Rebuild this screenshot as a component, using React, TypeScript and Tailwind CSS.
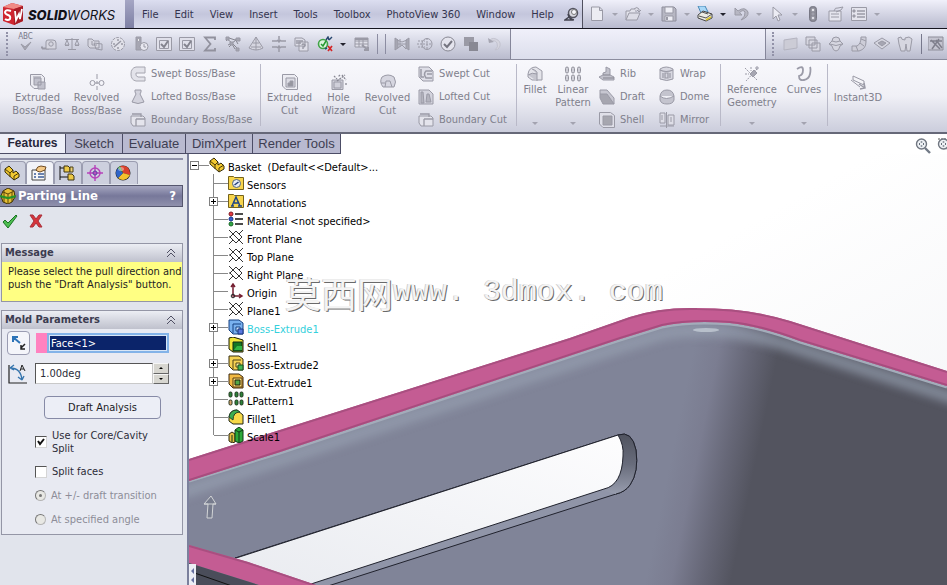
import { ReactNode, useState } from "react";

type Art = { children: ReactNode; size?: "sm" | "md" };

function Ico({ children, size = "md" }: Art) {
  return (
    <svg
      viewBox="0 0 16 16"
      className={size === "md" ? "h-4 w-4 shrink-0" : "h-3.5 w-3.5 shrink-0"}
      fill="none"
      stroke="#9a9aa6"
      strokeWidth="1"
      aria-hidden="true"
    >
      {children}
    </svg>
  );
}

const L = "#d6d6e0";
const D = "#a6a6b2";

const art: Record<string, ReactNode> = {
  spell: <><path d="M3 9l4 4 6-6-6 8.500z" fill={D} /></>,
  measure: <><path d="M1 12.500h7M1 10.500v2" strokeWidth="2" /><path d="M5 12V6q0-2 2-2h5q3 0 3 3v6H5z" fill={L} /><circle cx="10" cy="8" r="2.200" /></>,
  balance: <path d="M8 2v11M4 13.500h8M1 3.500h14M3 4L1 9h4zM13 4l-2 5h4zM1 9.500h4M11 9.500h4" />,
  section: <><path d="M1 3h4l2 2h5v7H3l-2-2z" fill={L} /><path d="M7 7l8 1v6l-6-1zM5 5v4h5" /></>,
  gauge: <><circle cx="8" cy="8" r="6.500" fill="#e2e2ea" strokeDasharray="3 1" /><path d="M4 11l7-6M3 8h2M8 3v2M11 8h2M8 11v2" strokeWidth="1.500" /></>,
  sensor: <><path d="M3 1h5v13H3z" fill={D} /><circle cx="5.500" cy="4" r="1.300" fill="#fff" /><circle cx="11" cy="10.500" r="4" fill="#e8e8f0" /><path d="M11 8v3h2" /></>,
  check: <><path d="M.5 1.500h15v13H.5zM3.500 4.500h9v8h-9z" fill="#e0e0ea" /><path d="M5 8l3 3 4-6" strokeWidth="2" stroke="#84848f" /></>,
  sigma: <path d="M13 4V1.500H3L8.500 8 3 14.500h10V12" strokeWidth="1.800" stroke="#91919d" />,
  network: <><path d="M1 2l6 5 7-5M3 9l4-2 6 6M1 5l3-3 6 2M10 3l3 5M4 11l3-3 3 5" stroke="#85858f" /><path d="M1 1h3v3H1zM11 2h4v3h-4zM5 6h3v3H5zM11 12h3v3h-3z" fill={D} /></>,
  cone: <><path d="M8 1L1 12q7 4 14 0z" fill={L} /><path d="M8 1v13M5 7h6M3 11h10" /></>,
  align: <path d="M1 5h5M10 5h5M1 11h5M10 11h5M8 0v5M6 4l2 2 2-2M8 16v-5M6 12l2-2 2 2" strokeWidth="1.500" />,
  compare: <><path d="M1 2h7l3 2v6H1zM5 6h9v9H5z" fill="#dedee8" /><path d="M2 5h7M2 7h5M8 9q1-2 3 0 0 2-2 2v2" strokeWidth="1.400" /></>,
  designCheck: <><circle cx="6" cy="8" r="4.500" stroke="#41a447" strokeWidth="1.600" fill="#dff3df" /><path d="M4 8l2 2 3-5" stroke="#269a31" strokeWidth="1.500" /><path d="M9 4l2-3 1 3M12 4l3-3M10 12l-2 1" stroke="#26466e" strokeWidth="1.400" /><path d="M11 10l4 5M15 10l-4 5" stroke="#d52525" strokeWidth="1.700" /></>,
  table: <><path d="M1 2h13v9H1zM1 5h13M1 8h13M5 2v9M9 2v9" fill="#dfdfe8" /><path d="M1 3h13M8 9l6 5M10 14h4v-3" strokeWidth="2" /></>,
  flow: <><path d="M1 2v12l3-2V4zM15 2v12l-3-2V4z" fill={D} /><path d="M3 4l5 2 5-2M4 8h8M4 12l4-3 4 4M6 3v8" /></>,
  globe: <><ellipse cx="10" cy="8" rx="5" ry="5.500" /><path d="M1 5h7M0 8h15M1 11h7M10 2v12" strokeDasharray="2 1" /></>,
  ok: <><circle cx="8" cy="8" r="7" fill="#e4e4ed" stroke="#888893" /><path d="M4 8l3 3 5-6" stroke="#757580" strokeWidth="2" /></>,
  overlap: <><path d="M1 1h10v9H1z" fill="#9a9aa5" stroke="none" /><path d="M6 6h9v9H6z" fill="#888893" stroke="none" /></>,
  turn: <><path d="M3 6q2-5 7-3t4 7q-1 4-5 4 4-3 2-7T3 6z" fill="#d5d5df" stroke="#c3c3cf" /><path d="M2 2l1 5 5-1z" fill={D} stroke="none" /></>,
  newFile: <path d="M2.500 1h8l3 3v10.500h-11zM10.500 1v3.500h3" fill="#ececf3" />,
  open: <><path d="M1 14V5h4l1-2h5v3" fill="#e2e2eb" /><path d="M1 14l3-7h11l-3 7zM9 3q3-3 5 0v3M12 4l2 2 2-2" fill="#dcdce6" /></>,
  save: <><path d="M1 1h12l2 2v12H1z" fill="#b7b7c3" stroke="#8e8e9c" /><path d="M4 1h8v6H4zM4 10h8v5H4z" fill="#eeeef5" /><path d="M6 11v3" strokeWidth="2" /></>,
  print: <><path d="M4 7L1 0h7l3 6z" fill="#a9d8f8" stroke="#4887b5" /><path d="M1 9l5-4 9 3v4l-6 3-8-3z" fill="#ecece4" stroke="#444" /><path d="M2 10l7 2 6-4M5 6l6 2" stroke="#555" /><path d="M9 14l5-3" stroke="#d8c22c" strokeWidth="1.500" /></>,
  undo: <path d="M2 2v7h7L6.500 6.700Q10 3 12 6q1 4-4 8 8-3 7-8Q12 0 5 5z" fill="#b7b7c3" />,
  cursor: <path d="M4 1v12l3-3 2 5 2-1-2-5h4z" fill="#ececf4" />,
  traffic: <><rect x="4.500" y="0.500" width="7" height="15" rx="3" fill="#898994" stroke="#777784" /><circle cx="8" cy="4" r="1.700" fill="#e4e4e9" /><circle cx="8" cy="8" r="1.200" fill="#adadb8" /><circle cx="8" cy="12" r="1.700" fill="#dedee5" /></>,
  props: <><path d="M1 5h12v10H1z" fill="#e5e5ee" /><path d="M6 5q1-4 4-3l5-1-2 3-5 2M3 8h8M3 11h8" /></>,
  options: <><path d="M.5 1.500h15v13H.5z" fill="#e4e4ed" /><path d="M6 5h8M6 8h8M6 11h8" strokeWidth="1.500" /><path d="M2 4h2v2H2zM2 9h2v2H2z" fill={D} /></>,
  pin: <><circle cx="9" cy="6" r="4.500" fill="#d7d7df" stroke="#555561" strokeWidth="1.500" /><circle cx="10" cy="5" r="2.500" fill="#f8f8fc" stroke="#777" /><path d="M4 7q1 5 6 6M5 10l-4 3h8" stroke="#444450" strokeWidth="1.500" /></>,
  sheet: <path d="M2 4l13-2v10L2 14z" fill="#ccccd6" stroke="#b4b4c0" />,
  copy: <path d="M1 1h9v8H1zM4 4h8v8H4zM7 7h8v8H7z" fill="#d6d6e0" />,
  sphere: <><path d="M8 1q4 0 4 4l3 3-3 2q-1 5-4 5t-4-5L1 8l3-3q0-4 4-4z" fill={L} /><path d="M2 8q6 3 12 0M4 5q4 2 8 0" /></>,
  bend: <><path d="M10 1h5v5q0 7-7 9H1v-5h5q4-2 4-9z" fill="#cdcdd8" /><path d="M10 3l5 2M9 7l4 3M5 10l2 5" /></>,
  rhomb: <><path d="M8 2l8 5-8 6-8-6z" fill={L} /><path d="M8 5l4 2-4 3-4-3z" fill={D} /></>,
  mold: <path d="M1 2l3-1q0 3 4 3V2l4-1 3 2-2 12h-3L9 8l-1 7H4L2 8z" fill={L} />,
  edit: <><path d="M0 1h15v13H0z" fill="#c4c4d0" stroke="#8d8d99" /><path d="M3 4l9 9M4 13l7-10M2 5h12M8 4l6 8" stroke="#7f7f8c" strokeWidth="1.500" /></>,
  extBoss: <><path d="M.5.500h11l3 3v11H4l-3.500-3.500z" fill="#ececf2" /><path d="M4 4h7v7H4zM8 8h7v7H8z" fill="#c1c1cc" /><path d="M3 3h8" /></>,
  revBoss: <><path d="M8 0v5M8 7v3M8 12v4" /><circle cx="3.500" cy="9" r="2.500" /><circle cx="12.500" cy="9" r="2.500" /><path d="M6 9h4" /></>,
  sweptBoss: <path d="M15 1H6Q1 2 1 8t5 7h9v-4H8q-3-1-2-4h9z" fill="#e3e3ea" stroke="#a6a6b0" />,
  loftBoss: <path d="M5 1h6v2l-1 2 4 8q-6 3-12 0l4-8-1-2z" fill="#d3d3dd" />,
  boundary: <><path d="M1 4h12l2 2v8H3l-2-3z" fill="#e4e4ec" /><path d="M2 2h9v3M6 7h9M6 7v7" strokeWidth="1.300" /></>,
  extCut: <><path d="M.5.500h12l3 3v12H4L.5 12z" fill="#ececf2" /><path d="M4 4h9v9H4z" fill="#dcdce4" /><path d="M6 12V9h2V7h3v5z" fill="#96969f" /></>,
  hole: <><path d="M1 6h11v9.500H1zM3 8h7v6H3z" fill="#d0d0da" /><path d="M6 7l8-6M11 1l4 5M9 1l-2 2M3 2l3 3M15 9v2" stroke="#888893" strokeDasharray="2 1" strokeWidth="1.300" /></>,
  revCut: <><path d="M2 3q6-4 12 0 3 5 0 10H3Q-1 8 2 3z" fill={L} /><path d="M5 13l1-6h4l2 6M1 9h4" /></>,
  sweptCut: <><path d="M1 1h10l4 4v10H5l-4-4z" fill="#dedee7" /><path d="M14 5H8q-3 3 0 7h6M14 8H9M3 3v8h3" strokeWidth="1.500" /></>,
  loftCut: <><path d="M1 1h10l4 4v10H1z" fill="#d3d3dd" /><path d="M3 14V3h2l1 11zM8 13l1-8h2l2 8z" fill="#b4b4be" /></>,
  fillet: <><path d="M1 8q1-7 8-7l6 4v9H5L1 11z" fill="#e4e4ea" /><path d="M1 9q4-3 9-1v7M5 3q6 2 5 5" fill="#c5c5ce" /></>,
  linear: <>{[0, 6, 12].map((x) => [0, 8].map((y) => <rect key={`${x}-${y}`} x={x + 0.5} y={y + 1} width="3" height="6" rx="1.500" fill="#cfcfd7" stroke="#94949e" />))}</>,
  rib: <><path d="M0 11l4-2V7l3-1V1l4 2v6l4 2v3H4z" fill="#c2c2cc" /><path d="M4 9h7M4 12h11" stroke="#84848f" /></>,
  draft: <><path d="M1 1h7l7 8v6L1 5z" fill="#c7c7d1" /><path d="M1 5h7l7 10H4L1 9z" fill="#a6a6b0" /></>,
  shell: <><path d="M.5.500h11l4 3v12H4l-3.500-3.500z" fill="#dfdfe8" /><path d="M4 4h9v9H4z" fill="#a6a6af" /></>,
  wrap: <><path d="M1 3q6-4 13 0v10q-6 3-13 0z" fill="#d8d8e1" /><path d="M1 4q6 3 13 0M4 7v5M6 7h3v5H6zM11 7v5" strokeWidth="1.200" /></>,
  dome: <path d="M1 7Q2 1 8 1t7 6v4q-1 4-7 4t-7-4zM1 7q6 5 14 0" fill="#c4c4ce" />,
  mirror: <><path d="M1 1h5v10H1zM9 3h6v10H9z" fill="#dedee7" /><path d="M7.500 0v16M3 3v5M12 5v5M1 14h14" /></>,
  refGeo: <><path d="M1 2l12 12M13 3L2 15M7 1v4M1 8h4" strokeDasharray="2 1" /><path d="M6 8l4-4 3 3-4 4z" fill={D} /><path d="M13 0v4M11 2h4" /></>,
  curves: <path d="M1 3Q7-1 7 4T3 10q0 5 5 4t6-6 0-7" strokeWidth="1.800" stroke="#9b9ba8" />,
  instant: <><path d="M3 6V2l11 5v4zM1 6l9 7" fill="#f4f4f8" /><path d="M9 10l6 4M10 15l5-1-1-5" strokeWidth="1.500" /></>,
  part: <><path d="M1 4l4-3 4 4v3l3-2 3 3v3l-5 3L1 7z" fill="#f3ca32" stroke="#352c0a" /><path d="M1 4l5 4v4M9 5L6 8M10 11v4M10 11l5-3" stroke="#493a08" /></>,
  manager: <><path d="M1 5h13v10H1z" fill="#f7f7f7" stroke="#444" /><path d="M3 9h2M7 9h6M3 12h2M7 12h6" stroke="#3d5d99" strokeWidth="1.300" /><path d="M5 5q1-4 5-4l5 1-1 3-5 2-3-1z" fill="#f4c987" stroke="#704c23" /></>,
  config: <><path d="M1 1v14M1 3h4M1 12h8" stroke="#111" /><path d="M5 1h4l2 2v4H5zM9 9h4l2 2v4H9z" fill="#edc945" stroke="#3d3212" /><path d="M11 2h3v5h-3z" fill="#efd478" stroke="#4b4018" /></>,
  dimx: <><circle cx="8" cy="8" r="5" stroke="#b642ba" strokeWidth="1.400" /><path d="M8 0v16M0 8h16" stroke="#b642ba" strokeWidth="1.400" /><circle cx="8" cy="8" r="2" stroke="#5c3ba3" /></>,
  display: <><circle cx="8" cy="8" r="7.500" fill="#222" stroke="none" /><path d="M8 8L5 1Q14-1 15 8v2z" fill="#d9402c" stroke="none" /><path d="M8 8l7 2Q10 18 3 13z" fill="#f4c22d" stroke="none" /><path d="M8 8l-5 5Q-1 8 3 3z" fill="#2f64c8" stroke="none" /><path d="M8 8L3 3l2-2z" fill="#4cae4a" stroke="none" /><ellipse cx="6" cy="4" rx="3" ry="2" fill="#fff" opacity=".4" stroke="none" /></>,
  parting: <><path d="M8 0l6 3 1 6-3 5-4 2-5-2-2-6 2-5z" fill="#e7bf35" stroke="#3d3108" /><path d="M3 4l5 2 6-3M8 6v10M4 3v11M12 4v10" stroke="#5b4808" /><path d="M0 8l8 2 8-2" stroke="#279128" strokeWidth="2.200" /></>,
  accept: <path d="M1 9l2-2 3 3 8-8 1 1-9 12z" fill="#4dbd50" stroke="#197324" />,
  cancel: <path d="M2 2h3l3 4 3-4h3l-4 6 4 6h-3l-3-4-3 4H2l4-6z" fill="#d7343b" stroke="#a8303a" />,
  sensors: <><path d="M0.500 1.500h5l1 1h9v12h-15z" fill="#f7d44c" stroke="#74621b" /><circle cx="8.500" cy="8.500" r="4" fill="#e8eef8" stroke="#567" /><path d="M6.500 10l4-3" stroke="#223c77" strokeWidth="1.500" /></>,
  annotations: <><path d="M0.500 1.500h5l1 1h9v12h-15z" fill="#f7d44c" stroke="#74621b" /><path d="M4 13L8 4l4 9M6 10h5M3 13h3M10 13h4" stroke="#1e4487" strokeWidth="1.500" /></>,
  material: <><circle cx="3" cy="3" r="2" fill="#e93842" stroke="#801a22" /><circle cx="3" cy="8" r="2" fill="#325ed4" stroke="#15318a" /><circle cx="3" cy="13" r="2" fill="#31a844" stroke="#186626" /><path d="M7 3h8M7 8h8M7 13h8" stroke="#111" strokeWidth="1.700" /></>,
  plane: <path d="M1 1l14 14M2 8l6-6 6 6-6 6zM1 8h1M1 15l4-4M11 5l4-4" stroke="#333" />,
  origin: <><path d="M5 2v11h8M3 4l2-3 2 3M11 11l3 2-3 2" stroke="#752032" strokeWidth="1.500" /><circle cx="5" cy="13" r="1.800" stroke="#242424" /></>,
  bossBlue: <><path d="M1 1h10l4 3v11H5l-4-4z" fill="#79b1ef" stroke="#164181" /><path d="M5 5h8M5 5v9M8 8h4v4H8z" stroke="#164181" fill="#d1e6ff" /><path d="M10 10h5v5h-5z" fill="#5978e0" stroke="#17367e" /></>,
  shellTree: <><path d="M1 1l4-1 10 3v12H5L1 12z" fill="#f1e639" stroke="#181b09" /><path d="M5 5h9v9H5z" fill="#137724" stroke="#102d14" /><path d="M6 13l3-4h5v4z" fill="#31b544" stroke="none" /></>,
  boss: <><path d="M1 1h10l4 3v11H5l-4-4z" fill="#f6d252" stroke="#352d11" /><path d="M5 5h8M5 5v9M8 8h4v4H8z" stroke="#4e4216" fill="#fff0a4" /><path d="M10 10h5v5h-5z" fill="#42b554" stroke="#174e1d" /></>,
  cut: <><path d="M1 1h10l4 3v11H5l-4-4z" fill="#f2b941" stroke="#3c2911" /><path d="M5 5h9v9H5z" fill="#f9dd71" stroke="#5b3d15" /><path d="M7 7h5v5H7z" fill="#52a748" stroke="#211d0b" /></>,
  pattern: <>{[1, 7, 12].map((x) => [1, 9].map((y) => <rect key={`${x}-${y}`} x={x} y={y} width="3" height="5" rx="1.300" fill={x === 1 && y === 9 ? "#d7a36a" : "#2d853b"} stroke="#243520" />))}</>,
  filletTree: <><path d="M1 8q1-7 8-7l6 5v9H5L1 12z" fill="#f7d948" stroke="#202617" /><path d="M1 8q1-7 8-7l3 2q-7 0-7 8z" fill="#3bad51" stroke="#214427" /></>,
  scale: <><path d="M1 7l3-2 3 2v8l-3 1-3-2z" fill="#e4bd43" stroke="#2c2911" /><path d="M7 3l4-3 4 3v11l-4 2-4-2z" fill="#2caa3a" stroke="#103816" /><path d="M7 3l4 2 4-2M11 5v11M4 8v7" stroke="#103816" /></>,
};

function Tool({ name, label, tight = false }: { name: string; label: string; tight?: boolean }) {
  return (
    <button type="button" aria-label={label} className={tight ? "flex h-5 w-4 shrink-0 items-center justify-center" : "flex h-6 w-[23px] shrink-0 items-center justify-center"}>
      <Ico>{art[name]}</Ico>
    </button>
  );
}

function Caret({ dark = false }: { dark?: boolean }) {
  return <span className={`block h-0 w-0 shrink-0 border-x-[3px] border-t-[3px] border-x-transparent ${dark ? "border-t-[#22222c]" : "border-t-[#a3a3b0]"}`} />;
}

function Grip() {
  return <span className="h-6 w-0.5 shrink-0 border-l-2 border-dotted border-[#9292a8]" />;
}

function Logo() {
  return (
    <div className="flex h-7 w-[125px] shrink-0 items-center gap-1 pl-0.5">
      <svg viewBox="0 0 22 24" className="h-6 w-[22px] shrink-0" aria-hidden="true">
        <path d="M1 5l9-4 11 3v15l-9 4-11-4z" fill="#ce2530" />
        <path d="M1 5l9-4 11 3-9 3z" fill="#f08b86" />
        <path d="M12 7l9-3v15l-9 4z" fill="#a81c26" />
        <path d="M9 9q-5-2-6 1 0 2 3 3t2 4q-2 2-5 0" fill="none" stroke="#fff" strokeWidth="2" />
        <path d="M13 9l1 9 3-6 1 5 2-10" fill="none" stroke="#fff" strokeWidth="1.800" />
      </svg>
      <span className="pt-0.5 font-['Inter',sans-serif] text-[13px] leading-5 italic text-[#111118]">
        <b className="font-extrabold">SOLID</b>WORKS
      </span>
    </div>
  );
}

function Big({ name, lines, width, caret = false, top = false }: { name: string; lines: string[]; width: string; caret?: boolean; top?: boolean }) {
  return (
    <button type="button" className={`flex h-full shrink-0 flex-col items-center ${width} ${top ? "pt-1.5" : "pt-3.5"}`}>
      <Ico>{art[name]}</Ico>
      {lines.map((t) => (
        <span key={t} className="leading-[13px] whitespace-nowrap first-of-type:mt-px">{t}</span>
      ))}
      {caret && <span className="mt-auto mb-[7px] block"><Caret /></span>}
    </button>
  );
}

function Stack({ items, width }: { items: [string, string][]; width: string }) {
  return (
    <div className={`flex h-full shrink-0 flex-col pt-0.5 ${width}`}>
      {items.map(([name, label]) => (
        <button key={label} type="button" className="flex h-[23px] items-center gap-[5px] whitespace-nowrap">
          <Ico>{art[name]}</Ico>
          {label}
        </button>
      ))}
    </div>
  );
}

function Rule() {
  return <span className="mt-1 h-[62px] w-px shrink-0 bg-[#b9b9c8]" />;
}

const menus = ["File", "Edit", "View", "Insert", "Tools", "Toolbox", "PhotoView 360", "Window", "Help"];
const tools: [string, string][] = [
  ["measure", "Measure"], ["balance", "Mass properties"], ["section", "Section properties"], ["gauge", "Performance"],
  ["sensor", "Sensor"], ["check", "Check"], ["check", "Geometry check"], ["sigma", "Equations"], ["network", "Deviation"], ["cone", "Draft"],
  ["align", "Thickness"], ["compare", "Compare"],
];
const moreTools: [string, string][] = [["flow", "Flow"], ["globe", "Sustainability"], ["ok", "Verify"], ["overlap", "Overlap"], ["turn", "Rotate"]];
const rightTools: [string, string][] = [["sheet", "Planar"], ["copy", "Offset"], ["sphere", "Revolve"], ["bend", "Sweep"], ["rhomb", "Knit"], ["mold", "Mold"]];

function TopBars() {
  return (
    <header className="text-[#34344e]">
      <div className="flex h-[29px] items-stretch overflow-hidden border-b border-[#14141e] bg-linear-to-b from-[#f0f0fa] to-[#b8bace]">
        <div className="flex shrink-0 items-center bg-linear-to-b from-[#e4e5f3] to-[#d4d6e8]"><Logo /></div>
        <span className="w-[9px] shrink-0 bg-linear-to-b from-[#a5a6c4] to-[#7e80a4]" />
        <nav className="flex w-[449px] shrink-0 items-center gap-4 border-r border-[#50505f] bg-linear-to-b from-[#dcdef0] via-[#c4c6dc] to-[#d8daec] pt-0.5 pl-2">
          {menus.map((m) => <button key={m} type="button" className="whitespace-nowrap">{m}</button>)}
          <button type="button" aria-label="Pin menu" className="-ml-1.5"><Ico>{art.pin}</Ico></button>
        </nav>
        <div className="flex shrink-0 items-center gap-[7px] pl-1.5">
          <Tool tight name="newFile" label="New" /><Caret />
          <Tool tight name="open" label="Open" /><Caret />
          <Tool tight name="save" label="Save" /><Caret />
          <Tool tight name="print" label="Print" /><Caret dark />
          <Tool tight name="undo" label="Undo" /><Caret />
          <Tool tight name="cursor" label="Select" /><Caret />
          <Tool tight name="traffic" label="Rebuild" />
          <Tool tight name="props" label="File properties" />
          <Tool tight name="options" label="Options" /><Caret />
        </div>
      </div>
      <div className="flex h-[31px] border-b border-[#8b8c9e] bg-linear-to-b from-[#f0f0fa] to-[#dcdeec]">
        <div className="flex w-[511px] shrink-0 items-center border-r border-[#85869a] bg-linear-to-b from-[#eeeff8] to-[#b9bbcd] pl-1.5">
          <Grip />
          <span className="w-1.5" />
          <button type="button" aria-label="Spell check" className="flex h-6 w-[23px] shrink-0 flex-col items-center text-[8px] leading-[9px] text-[#77778a]">
            ABC
            <svg viewBox="0 0 12 9" className="h-[9px] w-3" aria-hidden="true"><path d="M1 3l4 3 6-5-6 8z" fill="#a6a6b2" stroke="#9a9aa6" /></svg>
          </button>
          {tools.map(([n, l]) => <Tool key={l} name={n} label={l} />)}
          <Tool name="designCheck" label="Design checker" />
          <span className="mx-1 block"><Caret dark /></span>
          <Tool name="table" label="Design table" />
          <span className="mr-[7px] ml-1 h-5 w-px bg-[#8c8da2]" />
          <span className="mr-1 h-5 w-px bg-[#8c8da2]" />
          {moreTools.map(([n, l]) => <Tool key={l} name={n} label={l} />)}
        </div>
        <div className="ml-auto flex w-[182px] shrink-0 items-center overflow-hidden border-l border-[#85869a] bg-linear-to-b from-[#eeeff8] to-[#b9bbcd] pl-1.5">
          <Grip />
          <span className="w-1 shrink-0" />
          {rightTools.map(([n, l]) => <Tool key={l} name={n} label={l} />)}
          <span className="mr-0.5 ml-[5px] h-5 w-px shrink-0 bg-[#77788c]" />
          <Tool name="edit" label="Edit" />
        </div>
      </div>
    </header>
  );
}

function Ribbon() {
  return (
    <div className="flex h-[74px] overflow-hidden border-b-2 border-[#666878] bg-linear-to-b from-[#f8f8fc] via-[#f0f0f6] to-[#cbcddc] text-[#80808c]">
      <div className="flex shrink-0 pl-2">
        <Big name="extBoss" lines={["Extruded", "Boss/Base"]} width="w-[59px]" />
        <Big name="revBoss" lines={["Revolved", "Boss/Base"]} width="w-[59px]" />
        <span className="w-1" />
        <Stack width="w-[130px]" items={[["sweptBoss", "Swept Boss/Base"], ["loftBoss", "Lofted Boss/Base"], ["boundary", "Boundary Boss/Base"]]} />
      </div>
      <Rule />
      <div className="flex shrink-0 pl-1">
        <Big name="extCut" lines={["Extruded", "Cut"]} width="w-[49px]" />
        <Big name="hole" lines={["Hole", "Wizard"]} width="w-[49px]" />
        <Big name="revCut" lines={["Revolved", "Cut"]} width="w-[49px]" />
        <span className="w-1.5" />
        <Stack width="w-[98px]" items={[["sweptCut", "Swept Cut"], ["loftCut", "Lofted Cut"], ["boundary", "Boundary Cut"]]} />
      </div>
      <Rule />
      <div className="flex shrink-0">
        <Big top caret name="fillet" lines={["Fillet"]} width="w-[36px]" />
        <Big top caret name="linear" lines={["Linear", "Pattern"]} width="w-[40px]" />
        <span className="w-1.5" />
        <Stack width="w-[60px]" items={[["rib", "Rib"], ["draft", "Draft"], ["shell", "Shell"]]} />
        <Stack width="w-[61px]" items={[["wrap", "Wrap"], ["dome", "Dome"], ["mirror", "Mirror"]]} />
      </div>
      <Rule />
      <div className="flex shrink-0 pl-0.5">
        <Big top caret name="refGeo" lines={["Reference", "Geometry"]} width="w-[58px]" />
        <Big top caret name="curves" lines={["Curves"]} width="w-[46px]" />
      </div>
      <Rule />
      <Big name="instant" lines={["Instant3D"]} width="w-[60px]" />
    </div>
  );
}

function CommandTabs() {
  const tab = "h-5 shrink-0 border-r border-b border-[#4c4d66] bg-[#b9bad0] text-center text-[#3e3e52]";
  return (
    <div className="flex h-5 overflow-hidden bg-white font-['Liberation_Sans',Arial,sans-serif] text-[13px] leading-[17px]">
      <div role="tablist" className="flex">
        <button type="button" role="tab" aria-selected="true" className="h-5 w-[66px] shrink-0 border-r border-b border-[#4c4d66] bg-[#eeeff7] text-center text-[12px] font-bold text-[#26263a]">Features</button>
        <button type="button" role="tab" className={`w-[57px] ${tab}`}>Sketch</button>
        <button type="button" role="tab" className={`w-[63px] ${tab}`}>Evaluate</button>
        <button type="button" role="tab" className={`w-[67px] ${tab}`}>DimXpert</button>
        <button type="button" role="tab" className={`w-[88px] ${tab}`}>Render Tools</button>
      </div>
      <div className="ml-auto flex w-8 shrink-0 items-end gap-1.5 overflow-hidden">
        {["Zoom to fit", "Zoom to area"].map((l, i) => (
          <button key={l} type="button" aria-label={l} className="shrink-0">
            <Ico>
              {i === 1 && <path d="M1 1h13v8" stroke="#555" strokeDasharray="2 1" />}
              <circle cx="6.500" cy="6" r="5" fill="#eef1f5" stroke="#707680" strokeWidth="1.400" />
              <path d="M4 6h1M8 6h1M6.500 3.500v1M6.500 7.500v1" stroke="#394452" strokeWidth="1.600" />
              <path d="M10 10l5 5" stroke="#727a86" strokeWidth="2.400" />
            </Ico>
          </button>
        ))}
      </div>
    </div>
  );
}

function Group({ title, children }: { title: string; children: ReactNode }) {
  return (
    <section className="ml-px border border-[#9496a6] bg-[#e8eaf2]">
      <h2 className="flex h-[18px] items-center justify-between bg-linear-to-b from-[#eceef4] to-[#bfc1cd] px-[3px] text-[11px] font-bold text-[#3c3c50]">
        {title}
        <svg viewBox="0 0 10 10" className="mr-[3px] h-2.5 w-2.5" fill="none" stroke="#505064" aria-hidden="true"><path d="M1 5l4-4 4 4M1 9l4-4 4 4" /></svg>
      </h2>
      {children}
    </section>
  );
}

function PropertyPanel() {
  const [core, setCore] = useState(true);
  const [split, setSplit] = useState(false);
  const box = "h-3 w-3 shrink-0 appearance-none border border-[#d5d5d5] border-t-[#555] border-l-[#555] bg-white";
  const radio = "h-[11px] w-[11px] shrink-0 appearance-none rounded-full border border-[#b5b5b5] border-t-[#777] border-l-[#777] bg-[#e8e8e4]";
  return (
    <aside className="flex w-[189px] shrink-0 flex-col border-r-2 border-[#7b809c] bg-[#e1e4ec] pr-1">
      <div role="tablist" className="mt-1 flex h-[27px] border-t-2 border-[#9092aa] pt-px">
        {[["part", "Feature tree"], ["manager", "Property manager"], ["config", "Configurations"], ["dimx", "DimXpert manager"], ["display", "Display manager"]].map(([n, l], i) => (
          <button key={n} type="button" role="tab" aria-label={l} className={`flex h-[23px] w-7 shrink-0 items-center justify-center rounded-t border border-b-0 border-[#9b9db0] pr-0.5 first:w-[26px] ${i === 1 ? "bg-[#f2f3f8]" : "bg-[#cdd0de]"}`}>
            <Ico>{art[n]}</Ico>
          </button>
        ))}
      </div>
      <h1 className="flex h-[22px] items-center gap-0.5 border border-l-0 border-[#55566e] bg-linear-to-b from-[#a5a6c0] via-[#77789a] to-[#8f90ac] text-[13px] font-bold text-white">
        <Ico>{art.parting}</Ico>
        Parting Line
        <button type="button" aria-label="Help" className="mr-1.5 ml-auto font-bold">?</button>
      </h1>
      <div className="flex h-9 items-start gap-2.5 pt-1.5 pl-0.5">
        <button type="button" aria-label="OK"><Ico>{art.accept}</Ico></button>
        <button type="button" aria-label="Cancel"><Ico>{art.cancel}</Ico></button>
      </div>
      <Group title="Message">
        <p className="h-[39px] bg-[#ffff83] pt-[3px] pl-1.5 leading-[13px] whitespace-nowrap text-[#222]">Please select the pull direction and<br />push the "Draft Analysis" button.</p>
      </Group>
      <div className="h-2" />
      <Group title="Mold Parameters">
        <div className="flex h-[205px] flex-col pl-[5px] text-[#2c2c38]">
          <div className="flex items-center pt-0.5">
            <button type="button" aria-label="Reverse direction" className="mr-[6px] flex h-6 w-[23px] items-center justify-center rounded-sm border border-[#9a9cb2] bg-[#f4f5fa]">
              <Ico><path d="M9 8L3 3M2 7V2h5M5 2L2 5" stroke="#2c73b7" strokeWidth="2" /><path d="M14 9l-4 4M10 10v4h4" stroke="#222" strokeWidth="1.500" /></Ico>
            </button>
            <span className="h-5 w-[11px] bg-[#ff82c0]" />
            <input aria-label="Pull direction" readOnly value="Face<1>" className="h-5 w-[122px] border-2 border-[#83b3e8] bg-[#0b246a] pl-0.5 text-white outline outline-1 -outline-offset-3 outline-[#d8e6f6]" />
          </div>
          <div className="mt-2 flex items-center">
            <svg viewBox="0 0 20 20" className="mr-2 h-5 w-5" fill="none" aria-hidden="true">
              <path d="M2 1v18h18" stroke="#222" strokeWidth="1.200" />
              <path d="M3 4q11 0 12 12M3 4l4-3M3 4l4 2M15 16l-4-3M15 16l2-4" stroke="#3474ad" strokeWidth="1.300" />
              <path d="M13 7l2-6 3 6M14 5h3" stroke="#222" />
            </svg>
            <input aria-label="Draft angle" defaultValue="1.00deg" className="h-[21px] w-[118px] border border-[#c9c9c9] border-t-[#555] border-l-[#555] bg-white pl-1" />
            <div className="flex h-[21px] w-4 flex-col">
              {["Increase", "Decrease"].map((l, i) => (
                <button key={l} type="button" aria-label={l} className="flex flex-1 items-center justify-center border border-[#f6f6f6] border-r-[#666] border-b-[#666] bg-[#d7d6d0]">
                  <span className={`h-0 w-0 border-x-2 border-x-transparent ${i ? "border-t-2 border-t-black" : "border-b-2 border-b-black"}`} />
                </button>
              ))}
            </div>
          </div>
          <button type="button" className="mt-3 ml-[37px] h-[23px] w-[117px] rounded border border-[#868aa6] bg-[#eceef6] text-[#1b1b24]">Draft Analysis</button>
          <label className="mt-2.5 flex items-center gap-[5px] pl-7 leading-[13px]">
            <span className="grid shrink-0">
              <input type="checkbox" checked={core} onChange={(e) => setCore(e.target.checked)} className={`col-start-1 row-start-1 ${box}`} />
              {core && <svg viewBox="0 0 12 12" className="pointer-events-none col-start-1 row-start-1 h-3 w-3" fill="none" stroke="#111" strokeWidth="2"><path d="M3 5l2 3 4-5" /></svg>}
            </span>
            <span>Use for Core/Cavity<br />Split</span>
          </label>
          <label className="mt-2.5 flex items-center gap-[5px] pl-7 leading-[13px]">
            <input type="checkbox" checked={split} onChange={(e) => setSplit(e.target.checked)} className={box} />
            Split faces
          </label>
          <label className="mt-[11px] flex items-center gap-[5px] pl-7 leading-[13px] text-[#8d8d98]">
            <span className="grid place-items-center">
              <input type="radio" name="split" disabled defaultChecked className={`col-start-1 row-start-1 ${radio}`} />
              <span className="col-start-1 row-start-1 h-[3px] w-[3px] rounded-full bg-[#777]" />
            </span>
            At +/- draft transition
          </label>
          <label className="mt-[11px] flex items-center gap-[5px] pl-7 leading-[13px] text-[#8d8d98]">
            <input type="radio" name="split" disabled className={radio} />
            At specified angle
          </label>
        </div>
      </Group>
    </aside>
  );
}

function Model() {
  const upper = "M189 458L280 429 570 337 630 316Q660 306 697 307 748 307 790 320L947 370V385L800 340Q760 325 730 322 690 319 662 325L620 338 280 451 189 480z";
  const body = "M189 479L280 451 620 338 662 325Q690 319 730 322 760 325 800 340L947 385V585H189z";
  return (
    <svg viewBox="189 153 758 432" preserveAspectRatio="xMinYMin slice" className="absolute inset-0 h-full w-full" aria-hidden="true">
      <defs>
        <linearGradient id="sky" x1="0" y1="0" x2="1" y2="1"><stop offset=".45" stopColor="#fff" /><stop offset="1" stopColor="#f1f2f5" /></linearGradient>
        <linearGradient id="wall" gradientUnits="userSpaceOnUse" x1="672" y1="452" x2="754" y2="469">
          <stop offset="0" stopColor="#808498" /><stop offset=".3" stopColor="#7b7d91" /><stop offset=".65" stopColor="#666777" /><stop offset="1" stopColor="#53545f" />
        </linearGradient>
        <linearGradient id="opening" x1="0" y1="1" x2="1" y2="0"><stop offset="0" stopColor="#e9ebf0" /><stop offset="1" stopColor="#fdfdfe" /></linearGradient>
        <linearGradient id="slotEnd" x1="0" y1="0" x2="0" y2="1"><stop offset="0" stopColor="#50535f" /><stop offset=".5" stopColor="#686c7b" /><stop offset="1" stopColor="#989dae" /></linearGradient>
        <filter id="soft" x="-10%" y="-10%" width="120%" height="120%"><feGaussianBlur stdDeviation="4" /></filter>
        <clipPath id="bodyClip"><path d={body} /></clipPath>
      </defs>
      <path d="M189 153h758v432H189z" fill="url(#sky)" />
      <path d={body} fill="url(#wall)" />
      <g clipPath="url(#bodyClip)">
        <path d="M180 492L280 459 620 346 662 333Q690 327 730 331 760 335 800 348L960 399" fill="none" stroke="#98a2b2" strokeWidth="13" opacity=".65" filter="url(#soft)" />
        <path d="M189 480L280 452 620 339 662 326Q690 320 730 323 760 326 800 341L947 386" fill="none" stroke="#a3acba" strokeWidth="3" />
        <ellipse cx="706" cy="329" rx="13" ry="2" fill="#cbd3dc" opacity=".7" />
      </g>
      <path d={upper} fill="#c45c93" />
      <path d="M189 459L280 430 570 338 630 317Q660 307 697 308 748 308 790 321L947 371" fill="none" stroke="#a94f80" strokeWidth="2" />
      <path d="M189 479L280 450 620 337 662 324Q690 318 730 321 760 324 800 339L947 384" fill="none" stroke="#a84c7e" strokeWidth="2" />
      <path d="M235 557L618 434Q632 429 636 449 639 471 630 484 625 491 616 493L328 585H305z" fill="#9095a8" stroke="#20222d" />
      <path d="M618 434Q632 429 636 449 639 471 630 484 625 491 616 493L602 489Q623 480 623 450 622 439 618 434z" fill="url(#slotEnd)" />
      <path d="M618 434Q632 429 636 449 639 471 630 484 625 491 616 493" fill="none" stroke="#20222d" />
      <path d="M230 559L618 434Q624 444 623 455 622 484 604 488L311 583z" fill="url(#opening)" stroke="#20222d" />
      <path d="M189 544L248 561 319 585H262L189 562z" fill="#c45c93" />
      <path d="M189 545L248 562 316 585" fill="none" stroke="#a94f80" strokeWidth="2" />
      <path d="M189 562L262 585H189z" fill="#4a4d5a" />
      <path d="M189 570L232 585" stroke="#111" />
      <path d="M189 563h7v22h-7z" fill="#eceef5" />
      <path d="M194 567l-3 3 3 3zM194 576l-3 3 3 3z" fill="#6670a0" />
      <path d="M211 495l5 8h-3l-1 14h-5l1-14h-4zM204 503h12" fill="#777c8d" stroke="#d2d4d6" />
    </svg>
  );
}

type Node = { icon: string; label: string; open?: boolean; active?: boolean };
const nodes: Node[] = [
  { icon: "sensors", label: "Sensors" },
  { icon: "annotations", label: "Annotations", open: true },
  { icon: "material", label: "Material <not specified>" },
  { icon: "plane", label: "Front Plane" },
  { icon: "plane", label: "Top Plane" },
  { icon: "plane", label: "Right Plane" },
  { icon: "origin", label: "Origin" },
  { icon: "plane", label: "Plane1" },
  { icon: "bossBlue", label: "Boss-Extrude1", open: true, active: true },
  { icon: "shellTree", label: "Shell1" },
  { icon: "boss", label: "Boss-Extrude2", open: true },
  { icon: "cut", label: "Cut-Extrude1", open: true },
  { icon: "pattern", label: "LPattern1" },
  { icon: "filletTree", label: "Fillet1" },
  { icon: "scale", label: "Scale1" },
];

function Expander({ plus = false }: { plus?: boolean }) {
  return (
    <svg viewBox="0 0 9 9" className="h-[9px] w-[9px] shrink-0" shapeRendering="crispEdges" aria-hidden="true">
      <path d="M.5.5h8v8h-8z" fill="#fff" stroke="#808080" />
      <path d={plus ? "M2 4.500h5M4.500 2v5" : "M2 4.500h5"} stroke="#000" />
    </svg>
  );
}

function FeatureTree() {
  return (
    <div className="relative pt-0.5 pl-px text-black">
      <div className="flex h-[18px] items-center">
        <Expander />
        <span className="h-px w-2.5 bg-[#888]" />
        <Ico>{art.part}</Ico>
        <span className="pt-1.5 pl-[3px] whitespace-pre">{"Basket  (Default<<Default>..."}</span>
      </div>
      <ul>
        {nodes.map((n, i) => (
          <li key={n.label} className="flex h-[18px] items-center pl-[19px]">
            <span className="grid h-full w-[9px] shrink-0 place-items-center">
              <span className={`col-start-1 row-start-1 w-px bg-[#888] ${i === nodes.length - 1 ? "h-1/2 self-start" : "h-full"}`} />
              {n.open && <span className="col-start-1 row-start-1"><Expander plus /></span>}
            </span>
            <span className={`h-px bg-[#888] ${n.open ? "w-2.5" : "-ml-1 w-3.5"}`} />
            <Ico>{art[n.icon]}</Ico>
            <span className={`pt-1.5 pl-[3px] whitespace-nowrap ${n.active ? "text-[#35d0dc]" : ""}`}>{n.label}</span>
          </li>
        ))}
      </ul>
    </div>
  );
}

export default function App() {
  return (
    <div className="flex min-h-screen flex-col overflow-hidden bg-white font-['DejaVu_Sans_Condensed','Noto_Sans',sans-serif] text-[11px] leading-4">
      <TopBars />
      <Ribbon />
      <CommandTabs />
      <div className="flex flex-1">
        <PropertyPanel />
        <main className="relative min-w-0 flex-1 overflow-hidden">
          <Model />
          <FeatureTree />
          <div className="absolute top-[115px] left-24 flex items-center whitespace-pre text-[#f4f4f4] [text-shadow:1px_1px_0_#6a6a6a,-1px_0_0_#d0d0d0]">
            <span className="font-['Noto_Sans_CJK_SC',sans-serif] text-[36px] leading-[44px]">莫西网</span>
            <span className="pt-px font-['Liberation_Mono',monospace] text-[30px] leading-[44px]">www. 3dmox. com</span>
          </div>
        </main>
      </div>
    </div>
  );
}
